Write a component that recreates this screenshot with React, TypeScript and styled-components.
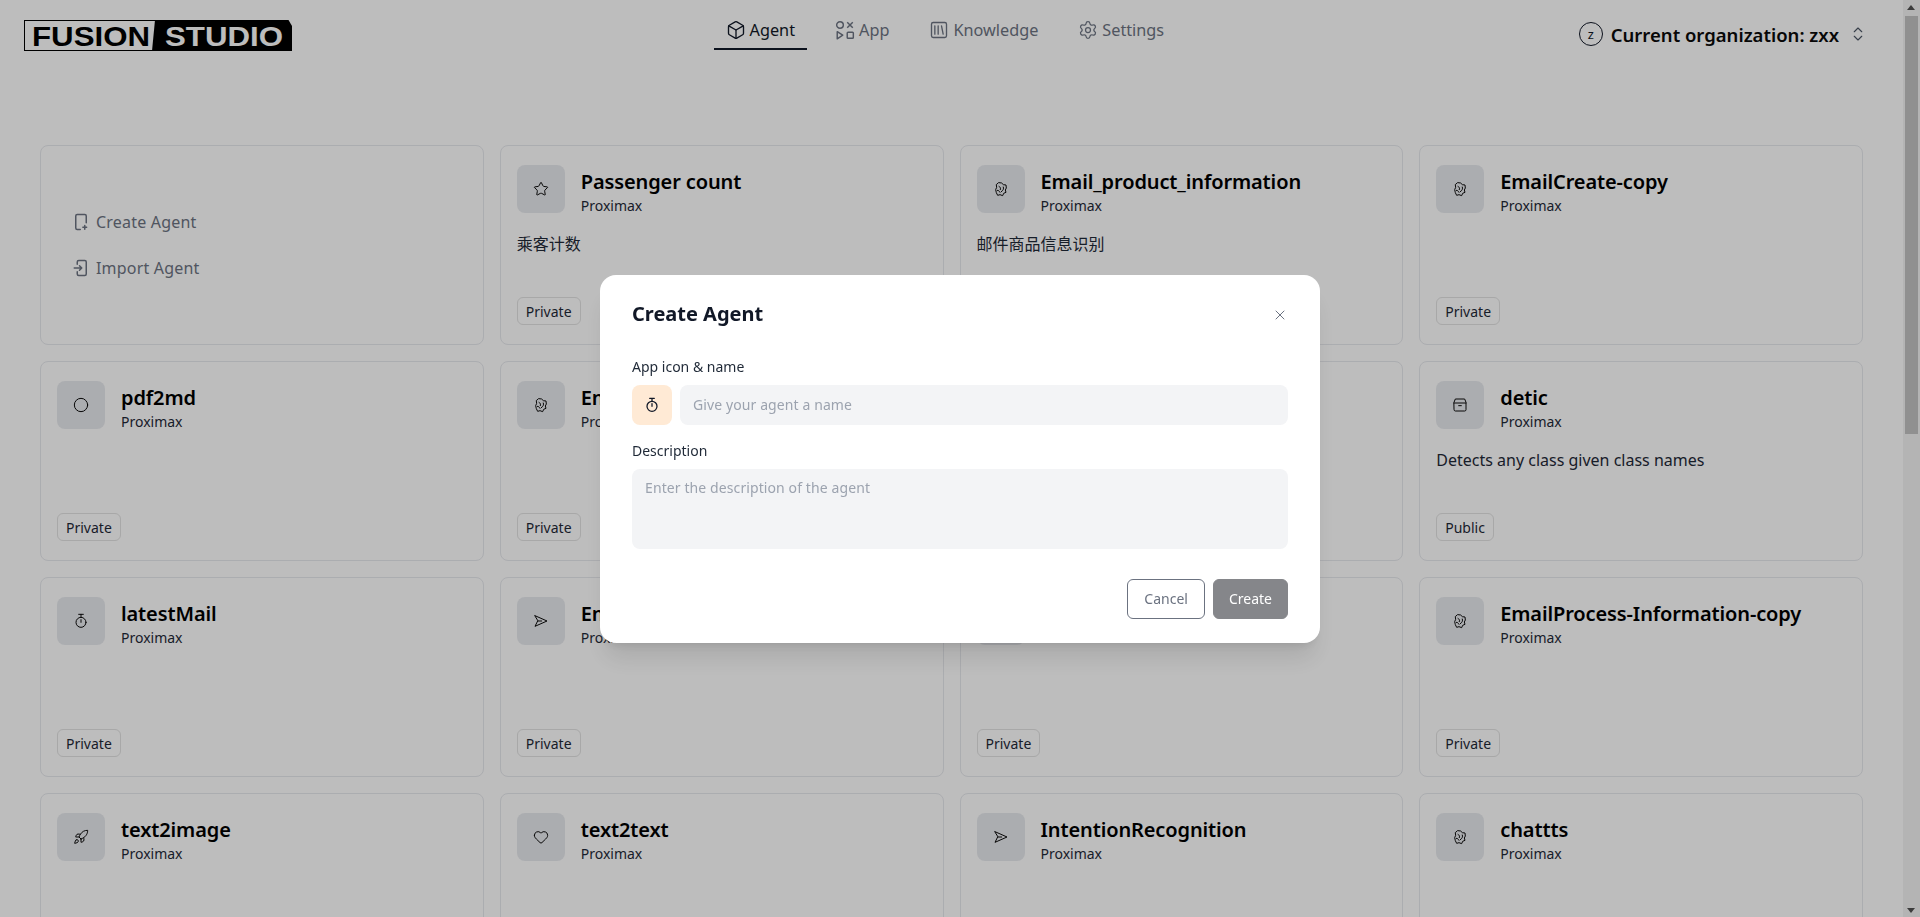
import React from "react";
import styled, { createGlobalStyle } from "styled-components";
import {
  Box,
  ChevronsUpDown,
  Circle,
  Heart,
  Rocket,
  Settings,
  SquareLibrary,
  Star,
  X,
} from "lucide-react";

const FONT = `"Noto Sans", "Noto Sans CJK SC", sans-serif`;

const GlobalStyle = createGlobalStyle`
  html, body {
    margin: 0;
    height: 100%;
    overflow: hidden;
    background: #fcfcfc;
    font-family: ${FONT};
  }
  * {
    box-sizing: border-box;
  }
`;

const Shell = styled.div`
  display: flex;
  height: 100vh;
  overflow: hidden;
`;

const Page = styled.div`
  flex: 1;
  min-width: 0;
  overflow: hidden;
`;

const ScrollTrack = styled.div`
  width: 17px;
  flex: none;
  background: #f1f1f1;
  display: flex;
  flex-direction: column;
  align-items: center;
  padding-top: 16px;
  padding-bottom: 16px;
  justify-content: space-between;
  position: relative;
`;

const ScrollThumb = styled.div`
  width: 13px;
  height: 418px;
  background: #c1c1c1;
`;

const ScrollArrow = styled.div<{ $down?: boolean }>`
  position: absolute;
  left: 4px;
  width: 0;
  height: 0;
  border-left: 4.5px solid transparent;
  border-right: 4.5px solid transparent;
  ${(p) =>
    p.$down
      ? "bottom: 4px; border-top: 5px solid #505050;"
      : "top: 5px; border-bottom: 5px solid #505050;"}
`;

const Header = styled.header`
  height: 145px;
  display: flex;
  justify-content: space-between;
  align-items: flex-start;
  padding: 20px 36px 0 24px;
`;

const LogoMark = styled.svg`
  display: block;
  flex: none;
`;

const Nav = styled.nav`
  display: flex;
  gap: 16px;
  margin-top: -7px;
  margin-left: 19px;
`;

const NavTab = styled.a<{ $active?: boolean }>`
  display: flex;
  align-items: center;
  gap: 4px;
  height: 37px;
  padding: 1px 12px 2px;
  font-size: 16.25px;
  color: ${(p) => (p.$active ? "#111827" : "#6b7280")};
  border-bottom: 2px solid ${(p) => (p.$active ? "#111827" : "transparent")};
  svg {
    flex: none;
  }
`;

const OrgSwitch = styled.div`
  display: flex;
  align-items: center;
  height: 28px;
`;

const OrgAvatar = styled.div`
  width: 24px;
  height: 24px;
  border-radius: 50%;
  border: 1.5px solid #111827;
  display: flex;
  align-items: center;
  justify-content: center;
  font-size: 13px;
  color: #111827;
  margin-right: 8px;
`;

const OrgName = styled.div`
  font-size: 18.5px;
  font-weight: 600;
  color: #0a0a0a;
  margin-right: 10px;
`;

const Grid = styled.main`
  display: grid;
  grid-template-columns: repeat(4, 1fr);
  grid-auto-rows: 200px;
  gap: 16px;
  padding: 0 40px;
`;

const Card = styled.div`
  border: 1px solid #e5e7eb;
  border-radius: 8px;
  padding: 19px 16px 19px;
  display: flex;
  flex-direction: column;
  min-width: 0;
`;

const ActionCard = styled(Card)`
  justify-content: center;
  padding: 0 31px;
  gap: 22px;
`;

const ActionRow = styled.div`
  display: flex;
  align-items: center;
  gap: 6px;
  height: 24px;
  font-size: 16px;
  letter-spacing: 0.2px;
  color: #6b7280;
`;

const CardHead = styled.div`
  display: flex;
  gap: 16px;
`;

const IconTile = styled.div`
  width: 48px;
  height: 48px;
  flex: none;
  border-radius: 8px;
  background: #e5e7eb;
  display: flex;
  align-items: center;
  justify-content: center;
  color: #0a0a0a;
`;

const CardTitles = styled.div`
  min-width: 0;
  display: flex;
  flex-direction: column;
`;

const CardName = styled.div`
  font-size: 20px;
  font-weight: 600;
  line-height: 28px;
  letter-spacing: -0.12px;
  margin-top: 3px;
  color: #000000;
`;

const CardOwner = styled.div`
  font-size: 14px;
  line-height: 20px;
  color: #1f2937;
`;

const CardDescription = styled.div`
  font-size: 16px;
  line-height: 24px;
  margin-top: 16px;
  color: #1f2937;
`;

const CardFoot = styled.div`
  margin-top: auto;
  display: flex;
`;

const Badge = styled.span`
  height: 28px;
  display: flex;
  align-items: center;
  padding: 0 8px;
  border: 1px solid #e0e0e0;
  border-radius: 6px;
  font-size: 14px;
  color: #1f2937;
`;

const Overlay = styled.div`
  position: fixed;
  inset: 0;
  background: rgba(0, 0, 0, 0.25);
  display: flex;
  align-items: center;
  justify-content: center;
`;

const Modal = styled.section`
  width: 720px;
  height: 368px;
  background: #ffffff;
  border-radius: 16px;
  padding: 24px 32px;
  position: relative;
  display: flex;
  flex-direction: column;
  box-shadow: 0 20px 25px -5px rgba(0, 0, 0, 0.1),
    0 8px 10px -6px rgba(0, 0, 0, 0.1);
`;

const ModalTitle = styled.h2`
  margin: 0 0 28px;
  font-size: 20px;
  line-height: 30px;
  font-weight: 700;
  color: #111827;
`;

const CloseButton = styled.button`
  position: absolute;
  top: 32px;
  right: 32px;
  width: 16px;
  height: 16px;
  padding: 0;
  border: 0;
  background: none;
  color: #6b7280;
  display: flex;
`;

const FieldLabel = styled.label`
  display: block;
  font-size: 14px;
  line-height: 20px;
  color: #1f2937;
  margin-bottom: 8px;
`;

const NameRow = styled.div`
  display: flex;
  gap: 8px;
  margin-bottom: 16px;
`;

const EmojiTile = styled.div`
  width: 40px;
  height: 40px;
  flex: none;
  border-radius: 8px;
  background: #ffead5;
  display: flex;
  align-items: center;
  justify-content: center;
  color: #111827;
`;

const NameInput = styled.input`
  flex: 1;
  height: 40px;
  border: 0;
  outline: 0;
  border-radius: 8px;
  background: #f3f4f6;
  padding: 0 13px;
  font-family: ${FONT};
  font-size: 14px;
  letter-spacing: 0.1px;
  color: #111827;
  &::placeholder {
    color: #9ca3af;
    opacity: 1;
  }
`;

const DescriptionInput = styled.textarea`
  display: block;
  width: 100%;
  height: 80px;
  border: 0;
  outline: 0;
  resize: none;
  border-radius: 8px;
  background: #f3f4f6;
  padding: 9px 13px;
  font-family: ${FONT};
  font-size: 14px;
  letter-spacing: 0.1px;
  line-height: 20px;
  &::placeholder {
    color: #9ca3af;
    opacity: 1;
  }
`;

const ModalActions = styled.div`
  display: flex;
  justify-content: flex-end;
  gap: 8px;
  margin-top: 30px;
`;

const ModalButton = styled.button<{ $primary?: boolean }>`
  height: 40px;
  padding: 0 ${(p) => (p.$primary ? 15 : 16)}px;
  border-radius: 6px;
  font-family: ${FONT};
  font-size: 14px;
  border: 1px solid ${(p) => (p.$primary ? "#85868a" : "#6b7280")};
  background: ${(p) => (p.$primary ? "#85868a" : "#ffffff")};
  color: ${(p) => (p.$primary ? "#ffffff" : "#6b7280")};
`;

function Logo() {
  return (
    <LogoMark width="268" height="31" viewBox="0 0 268 31">
      <rect x="0.5" y="0.5" width="135" height="30" fill="none" stroke="#000" />
      <polygon points="131,0 264.5,0 268,6 268,31 128,31" fill="#000" />
      <text
        x="8"
        y="26"
        fontFamily="Liberation Sans, sans-serif"
        fontWeight="700"
        fontSize="28"
        textLength="118"
        lengthAdjust="spacingAndGlyphs"
        fill="#000"
      >
        FUSION
      </text>
      <text
        x="141"
        y="26"
        fontFamily="Liberation Sans, sans-serif"
        fontWeight="700"
        fontSize="28"
        textLength="118"
        lengthAdjust="spacingAndGlyphs"
        fill="#fcfcfc"
      >
        STUDIO
      </text>
    </LogoMark>
  );
}

function AppGlyph() {
  return (
    <svg width="20" height="20" viewBox="0 0 18 18" fill="none" stroke="currentColor" strokeWidth="1.3">
      <circle cx="4.5" cy="4.5" r="3" />
      <path d="M11 2l5 5M16 2l-5 5" />
      <path d="M2 10.5l5 3.2-5 3.2z" strokeLinejoin="round" />
      <rect x="11" y="11" width="5.5" height="5.5" rx="0.8" />
    </svg>
  );
}

function NewPageGlyph() {
  return (
    <svg width="18" height="18" viewBox="0 0 24 24" fill="none" stroke="currentColor" strokeWidth="2" strokeLinecap="round">
      <path d="M11 22H7a2 2 0 0 1-2-2V4a2 2 0 0 1 2-2h10a2 2 0 0 1 2 2v9" />
      <path d="M17 16.5v5M14.5 19h5" />
    </svg>
  );
}

function ImportGlyph() {
  return (
    <svg width="18" height="18" viewBox="0 0 24 24" fill="none" stroke="currentColor" strokeWidth="2" strokeLinecap="round" strokeLinejoin="round">
      <path d="M7 7V4a2 2 0 0 1 2-2h8a2 2 0 0 1 2 2v16a2 2 0 0 1-2 2H9a2 2 0 0 1-2-2v-3" />
      <path d="M3 12h10M10 9l3 3-3 3" />
    </svg>
  );
}

type GlyphProps = { size?: number; strokeWidth?: number };

function glyph(paths: React.ReactNode) {
  return function Glyph({ size = 16, strokeWidth = 1.5 }: GlyphProps) {
    return (
      <svg
        width={size}
        height={size}
        viewBox="0 0 24 24"
        fill="none"
        stroke="currentColor"
        strokeWidth={strokeWidth}
        strokeLinecap="round"
        strokeLinejoin="round"
      >
        {paths}
      </svg>
    );
  };
}

const BlobGlyph = glyph(
  <>
    <path d="M9 2.5 13 3l2.5 2.5 4 .5L20 10.5l-1.5 3 1 3.5-3.5 1.5-1.5 3.5-4-1.5-3.5 1-2-4L4 13l1.5-3.5L5 6z" />
    <path d="M9 8c2 1 3 3 2 5M15.5 9c1 2.5 0 5-3 7M6.5 14c2 0 3 1 4 3" />
  </>
);

const TimerGlyph = glyph(
  <>
    <path d="M8.5 2h7M12 2v4" />
    <circle cx="12" cy="14" r="7.5" />
    <path d="M12 10v4" />
  </>
);

const PlaneGlyph = glyph(<path d="M3 4l18 8-18 8 4-8zM7 12h6" />);

const CrateGlyph = glyph(
  <>
    <path d="M3 8l2-5h14l2 5v11a2 2 0 0 1-2 2H5a2 2 0 0 1-2-2z" />
    <path d="M3 9h18M10 13h4" />
  </>
);

type Agent = {
  name: string;
  icon: React.ComponentType<GlyphProps>;
  description?: string;
  scope?: string;
};

const AGENTS: Agent[] = [
  { name: "Passenger count", icon: Star, description: "乘客计数", scope: "Private" },
  { name: "Email_product_information", icon: BlobGlyph, description: "邮件商品信息识别", scope: "Private" },
  { name: "EmailCreate-copy", icon: BlobGlyph, scope: "Private" },
  { name: "pdf2md", icon: Circle, scope: "Private" },
  { name: "EmailCreate", icon: BlobGlyph, scope: "Private" },
  { name: "EmailProcess", icon: BlobGlyph, scope: "Private" },
  { name: "detic", icon: CrateGlyph, description: "Detects any class given class names", scope: "Public" },
  { name: "latestMail", icon: TimerGlyph, scope: "Private" },
  { name: "EmailSend", icon: PlaneGlyph, scope: "Private" },
  { name: "EmailInfo", icon: BlobGlyph, scope: "Private" },
  { name: "EmailProcess-Information-copy", icon: BlobGlyph, scope: "Private" },
  { name: "text2image", icon: Rocket },
  { name: "text2text", icon: Heart },
  { name: "IntentionRecognition", icon: PlaneGlyph },
  { name: "chattts", icon: BlobGlyph },
];

export default function App() {
  return (
    <>
      <GlobalStyle />
      <Shell>
        <Page>
          <Header>
            <Logo />
            <Nav>
              <NavTab $active>
                <Box size={20} strokeWidth={1.6} />
                Agent
              </NavTab>
              <NavTab>
                <AppGlyph />
                App
              </NavTab>
              <NavTab>
                <SquareLibrary size={20} strokeWidth={1.6} />
                Knowledge
              </NavTab>
              <NavTab>
                <Settings size={20} strokeWidth={1.5} />
                Settings
              </NavTab>
            </Nav>
            <OrgSwitch>
              <OrgAvatar>z</OrgAvatar>
              <OrgName>Current organization: zxx</OrgName>
              <ChevronsUpDown size={18} strokeWidth={1.5} color="#4b5563" />
            </OrgSwitch>
          </Header>
          <Grid>
            <ActionCard>
              <ActionRow>
                <NewPageGlyph />
                Create Agent
              </ActionRow>
              <ActionRow>
                <ImportGlyph />
                Import Agent
              </ActionRow>
            </ActionCard>
            {AGENTS.map((agent) => (
              <Card key={agent.name}>
                <CardHead>
                  <IconTile>
                    <agent.icon size={16} strokeWidth={1.5} />
                  </IconTile>
                  <CardTitles>
                    <CardName>{agent.name}</CardName>
                    <CardOwner>Proximax</CardOwner>
                  </CardTitles>
                </CardHead>
                {agent.description && (
                  <CardDescription>{agent.description}</CardDescription>
                )}
                {agent.scope && (
                  <CardFoot>
                    <Badge>{agent.scope}</Badge>
                  </CardFoot>
                )}
              </Card>
            ))}
          </Grid>
        </Page>
        <ScrollTrack>
          <ScrollArrow />
          <ScrollThumb />
          <ScrollArrow $down />
        </ScrollTrack>
      </Shell>
      <Overlay>
        <Modal>
          <ModalTitle>Create Agent</ModalTitle>
          <CloseButton>
            <X size={16} strokeWidth={1.5} />
          </CloseButton>
          <FieldLabel>App icon &amp; name</FieldLabel>
          <NameRow>
            <EmojiTile>
              <TimerGlyph size={16} strokeWidth={1.9} />
            </EmojiTile>
            <NameInput placeholder="Give your agent a name" />
          </NameRow>
          <FieldLabel>Description</FieldLabel>
          <DescriptionInput placeholder="Enter the description of the agent" />
          <ModalActions>
            <ModalButton>Cancel</ModalButton>
            <ModalButton $primary>Create</ModalButton>
          </ModalActions>
        </Modal>
      </Overlay>
    </>
  );
}
